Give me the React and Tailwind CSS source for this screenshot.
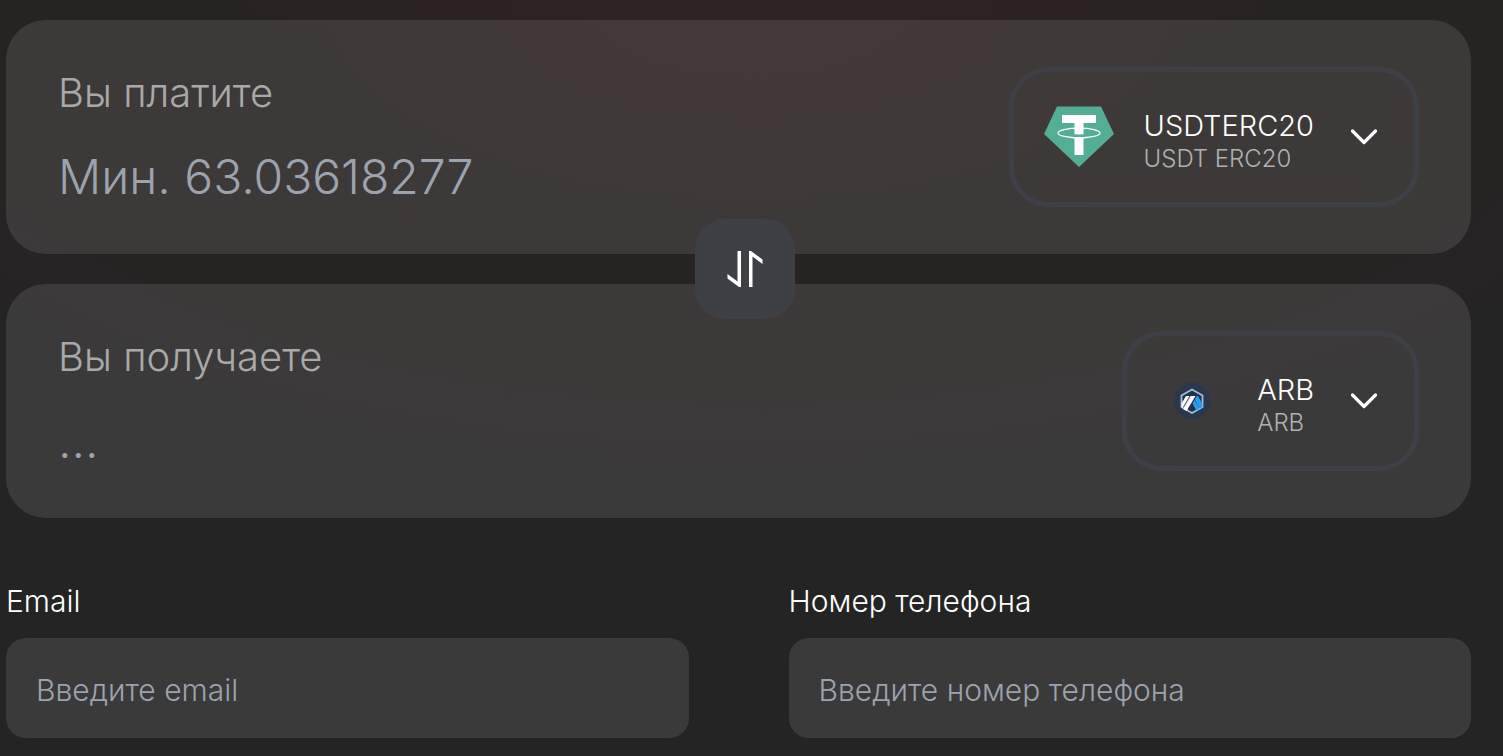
import React, { useState } from 'react';
import { Listbox, ListboxButton, ListboxOptions, ListboxOption } from '@headlessui/react';

const TetherIcon = () => (
  <svg viewBox="0 0 70 62" className="w-[70px] h-[62px]" aria-hidden="true">
    <path d="M13 0.500H57L70 28L35 61L0 28Z" fill="#53ae94" />
    <ellipse cx="35" cy="27" rx="21" ry="4.800" fill="none" stroke="#fff" strokeWidth="1.200" />
    <path d="M18 9H52V17H39.500V28.500H30.500V17H18Z" fill="#fff" />
    <path d="M30.500 31H39.500V49H30.500Z" fill="#fff" />
    <path d="M30 29.500H40" stroke="#53ae94" strokeWidth="1.600" />
    <path d="M26 31.300Q35 32.400 44 31.300" fill="none" stroke="#fff" strokeWidth="1.300" />
  </svg>
);

const ArbitrumIcon = () => (
  <svg viewBox="0 0 38 38" className="w-[38px] h-[38px]" aria-hidden="true">
    <circle cx="19" cy="19" r="18.500" fill="#2d374b" />
    <path d="M19 7.500L29.500 13.500V25L19 31L8.500 25V13.500Z" fill="#213147" stroke="#9dbfdf" strokeWidth="1.800" />
    <path d="M21.800 17.500L23.800 14H25L29.300 22V25L26.500 26.500Z" fill="#28a0f0" />
    <path d="M19.500 21.500L21.500 18L26.500 26.500L23.500 28.500Z" fill="#28a0f0" />
    <path d="M13 14H16.500L9.500 26L8.500 25V21.500Z" fill="#fff" />
    <path d="M17.500 14H22.500L13.500 29L10 27Z" fill="#fff" />
    <path d="M17.200 14.500L10 26.500" stroke="#8794a8" strokeWidth="0.800" />
  </svg>
);

const ChevronIcon = () => (
  <svg viewBox="0 0 28 18" className="w-7 h-[18px]" fill="none" stroke="#fff" strokeWidth="3.200"
       strokeLinecap="round" strokeLinejoin="round" aria-hidden="true">
    <path d="M2.500 3L14 14.500L25.500 3" />
  </svg>
);

const SwapIcon = () => (
  <svg viewBox="0 0 36 36" className="w-9 h-9" fill="#fff" aria-hidden="true">
    <path d="M10.500 0H14V36H12L0.500 27.500V23L10.500 30.500Z" />
    <path d="M25.500 36H22V0H24L35.500 8.500V13L25.500 5.500Z" />
  </svg>
);

const currencies = [
  { code: 'USDTERC20', name: 'USDT ERC20', Icon: TetherIcon },
  { code: 'ARB', name: 'ARB', Icon: ArbitrumIcon },
];

// Currency picker on the right side of a card
const CurrencySelect = ({ value, onChange }) => {
  const { Icon } = value;

  return (
    <Listbox value={value} onChange={onChange}>
      <ListboxButton className="flex items-center h-[140px] pl-[30px] pr-9 border-[5px] border-[#3f4047] rounded-[40px] text-left">
        <span className="flex justify-center w-[70px] mr-[30px]">
          <Icon />
        </span>
        <span className="block pt-2 mr-9">
          <span className="block text-[29px] leading-9 font-light text-white">{value.code}</span>
          <span className="block text-[24px] leading-[30px] font-light text-[#b0b0b0]">{value.name}</span>
        </span>
        <ChevronIcon />
      </ListboxButton>
      <ListboxOptions anchor="bottom end" className="z-20 rounded-[20px] bg-[#3f4045] p-3 text-white">
        {currencies.map((c) => (
          <ListboxOption key={c.code} value={c} className="px-4 py-2 text-2xl cursor-pointer">
            {c.code}
          </ListboxOption>
        ))}
      </ListboxOptions>
    </Listbox>
  );
};

// One side of the exchange: amount on the left, currency on the right
const AmountCard = ({ id, label, placeholder, currency, onCurrencyChange }) => (
  <div className="flex items-start justify-between mr-3 px-[52px] py-[47px] rounded-[40px] bg-white/10">
    <div className="flex-1 min-w-0">
      <label htmlFor={id} className="block text-[40px] leading-[52px] font-light text-[#a9a9a9]">{label}</label>
      <input id={id} type="text" inputMode="decimal" placeholder={placeholder}
             className="block w-full h-[60px] mt-7 text-[48px] font-light bg-transparent outline-none text-white placeholder:text-[#9ca3af]" />
    </div>
    <CurrencySelect value={currency} onChange={onCurrencyChange} />
  </div>
);

const TextField = ({ id, type, label, placeholder }) => (
  <div>
    <label htmlFor={id} className="block text-[30px] leading-[38px] font-light text-white">{label}</label>
    <input id={id} type={type} placeholder={placeholder}
           className="block w-full h-[100px] mt-[18px] px-[30px] pt-1 rounded-[20px] bg-white/10 text-[30px] font-light text-white outline-none placeholder:text-[#9ca3af]" />
  </div>
);

const App = () => {
  const [from, setFrom] = useState(currencies[0]);
  const [to, setTo] = useState(currencies[1]);

  const handleSwap = () => {
    setFrom(to);
    setTo(from);
  };

  return (
    <div className="min-h-screen bg-[#242424] bg-[radial-gradient(ellipse_80%_560px_at_50%_0px,#2f2323_0%,#282323_45%,#242424_100%)] font-['Inter',sans-serif]">
      <form className="pt-5 pb-[18px] pl-1.5 pr-5">
        <AmountCard id="pay" label="Вы платите" placeholder="Мин. 63.03618277"
                    currency={from} onCurrencyChange={setFrom} />

        <div className="relative z-10 flex justify-center -my-[35px]">
          <button type="button" onClick={handleSwap} aria-label="Поменять"
                  className="flex items-center justify-center w-[100px] h-[100px] rounded-[30px] bg-[#3f4045]">
            <SwapIcon />
          </button>
        </div>

        <AmountCard id="receive" label="Вы получаете" placeholder="..."
                    currency={to} onCurrencyChange={setTo} />

        <div className="grid grid-cols-2 gap-[100px] mt-16 mr-3">
          <TextField id="email" type="email" label="Email" placeholder="Введите email" />
          <TextField id="phone" type="tel" label="Номер телефона" placeholder="Введите номер телефона" />
        </div>
      </form>
    </div>
  );
};

export default App;
